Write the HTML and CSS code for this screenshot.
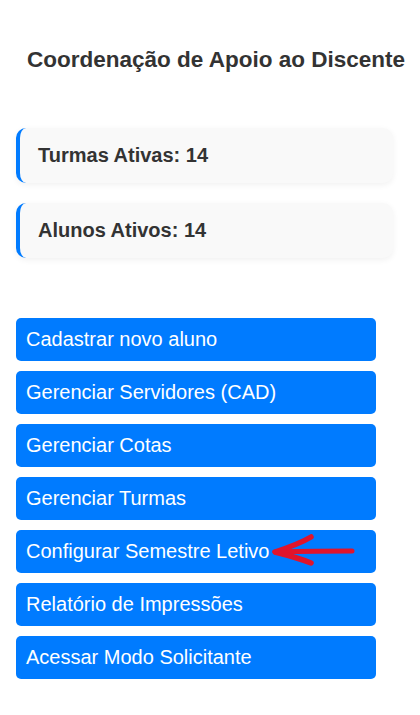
FILE: index.html
```html
<!DOCTYPE html>
<html lang="pt-BR">
<head>
<meta charset="utf-8">
<title>Coordenação de Apoio ao Discente</title>
<link rel="stylesheet" href="styles.css">
</head>
<body>
<main class="page">
  <h1 class="title">Coordenação de Apoio ao Discente</h1>
  <section class="stats">
    <div class="card">Turmas Ativas: 14</div>
    <div class="card">Alunos Ativos: 14</div>
  </section>
  <nav class="actions">
    <button class="btn">Cadastrar novo aluno</button>
    <button class="btn">Gerenciar Servidores (CAD)</button>
    <button class="btn">Gerenciar Cotas</button>
    <button class="btn">Gerenciar Turmas</button>
    <button class="btn">Configurar Semestre Letivo
      <svg class="arrow" width="92" height="36" viewBox="0 0 92 36" aria-hidden="true">
        <path d="M8 19 C 30 18.5, 60 18, 85 18" fill="none" stroke="#e0142c" stroke-width="5" stroke-linecap="round"/>
        <path d="M44 4 C 34 10, 20 15, 8 19 C 20 22, 34 26, 44 30" fill="none" stroke="#e0142c" stroke-width="5.5" stroke-linecap="round" stroke-linejoin="round"/>
      </svg>
    </button>
    <button class="btn">Relatório de Impressões</button>
    <button class="btn">Acessar Modo Solicitante</button>
  </nav>
</main>
</body>
</html>
```
FILE: styles.css
```css
html, body {
  margin: 0;
  padding: 0;
  background: #ffffff;
}

body {
  font-family: "Liberation Sans", Arial, sans-serif;
  color: #333333;
}

.page {
  padding: 0 16px 36px 16px;
}

.title {
  margin: 47px 0 0 0;
  padding-left: 11px;
  font-size: 22.5px;
  line-height: 26px;
  font-weight: bold;
  color: #333333;
  white-space: nowrap;
}

.stats {
  margin-top: 55px;
  display: flex;
  flex-direction: column;
  gap: 20px;
  width: 377px;
}

.card {
  background: #f9f9f9;
  border-left: 4px solid #007bff;
  border-radius: 10px;
  padding: 16px 18px;
  font-size: 20px;
  line-height: 23px;
  font-weight: bold;
  color: #333333;
  box-shadow: 0 2px 6px rgba(0, 0, 0, 0.06);
}

.actions {
  margin-top: 60px;
  display: flex;
  flex-direction: column;
  gap: 10px;
}

.btn {
  position: relative;
  display: block;
  width: 360px;
  margin: 0;
  padding: 10px 10px;
  border: none;
  border-radius: 5px;
  background: #007bff;
  color: #ffffff;
  font-family: "Liberation Sans", Arial, sans-serif;
  font-size: 20px;
  line-height: 23px;
  text-align: left;
  cursor: pointer;
}

.arrow {
  position: absolute;
  left: 251px;
  top: 3px;
}
```
